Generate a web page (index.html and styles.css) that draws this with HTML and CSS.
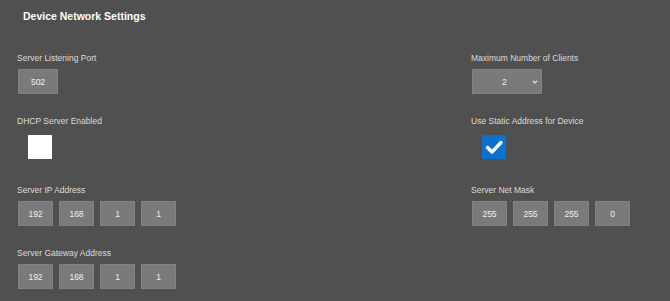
FILE: index.html
```html
<!DOCTYPE html>
<html>
<head>
<meta charset="utf-8">
<link rel="stylesheet" href="styles.css">
</head>
<body>
<div class="page">
  <h1 class="title">Device Network Settings</h1>
  <div class="grid">
    <div class="field">
      <div class="label">Server Listening Port</div>
      <div class="inputs"><div class="box port">502</div></div>
    </div>
    <div class="field">
      <div class="label">Maximum Number of Clients</div>
      <div class="select"><span class="sel-val">2</span>
        <svg class="chev" width="6" height="4" viewBox="0 0 6 4"><path d="M0.8 0.8 L3 3 L5.2 0.8" fill="none" stroke="#e8e8e8" stroke-width="1.2"/></svg>
      </div>
    </div>
    <div class="field">
      <div class="label">DHCP Server Enabled</div>
      <div class="check-wrap"><div class="check"></div></div>
    </div>
    <div class="field">
      <div class="label">Use Static Address for Device</div>
      <div class="check-wrap"><div class="check checked">
        <svg width="24" height="24" viewBox="0 0 24 24"><path d="M5.5 12.5 L10 17 L19 7.5" fill="none" stroke="#fff" stroke-width="3.4" stroke-linecap="round" stroke-linejoin="round"/></svg>
      </div></div>
    </div>
    <div class="field">
      <div class="label">Server IP Address</div>
      <div class="inputs">
        <div class="box">192</div><div class="box">168</div><div class="box">1</div><div class="box">1</div>
      </div>
    </div>
    <div class="field">
      <div class="label">Server Net Mask</div>
      <div class="inputs">
        <div class="box">255</div><div class="box">255</div><div class="box">255</div><div class="box">0</div>
      </div>
    </div>
    <div class="field">
      <div class="label">Server Gateway Address</div>
      <div class="inputs">
        <div class="box">192</div><div class="box">168</div><div class="box">1</div><div class="box">1</div>
      </div>
    </div>
  </div>
</div>
</body>
</html>
```
FILE: styles.css
```css
html, body {
  margin: 0;
  padding: 0;
  background: #505050;
  width: 670px;
  height: 301px;
  overflow: hidden;
}
.page {
  font-family: "Liberation Sans", Arial, sans-serif;
  color: #e6e6e6;
}
.title {
  margin: 0;
  padding: 10px 0 0 23px;
  font-size: 10.5px;
  line-height: 13px;
  font-weight: bold;
  color: #ffffff;
}
.grid {
  display: grid;
  grid-template-columns: 454px auto;
  row-gap: 22px;
  padding: 30px 0 0 18px;
}
.field {
  display: flex;
  flex-direction: column;
  gap: 6px;
}
.label {
  font-size: 8.5px;
  line-height: 10px;
  color: #dcdcdc;
  margin-left: -1px;
}
.inputs {
  display: flex;
  gap: 6px;
}
.box {
  width: 35px;
  height: 25px;
  box-sizing: border-box;
  background: #7a7a7a;
  border: 1px solid #828282;
  font-size: 8.5px;
  color: #f0f0f0;
  display: flex;
  align-items: center;
  justify-content: center;
}
.box.port {
  width: 40px;
}
.select {
  position: relative;
  width: 70px;
  height: 25px;
  box-sizing: border-box;
  background: #7a7a7a;
  border: 1px solid #828282;
  font-size: 8.5px;
  color: #f0f0f0;
  display: flex;
  align-items: center;
  padding-left: 29px;
}
.chev {
  position: absolute;
  right: 3px;
  top: 10px;
}
.check-wrap {
  padding: 3px 0 4px 10px;
}
.check {
  width: 24px;
  height: 24px;
  background: #ffffff;
}
.check.checked {
  background: #0a72cc;
}
.check svg {
  display: block;
}
```
